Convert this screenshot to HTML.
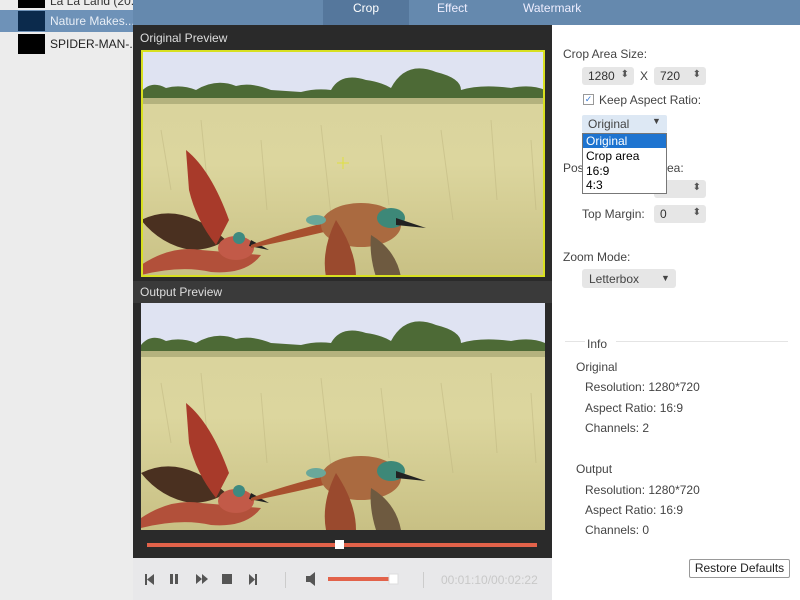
<!DOCTYPE html>
<html><head><meta charset="utf-8"><style>
*{margin:0;padding:0;box-sizing:border-box}
body{width:800px;height:600px;overflow:hidden;position:relative;font-family:"Liberation Sans","DejaVu Sans",sans-serif;font-size:12px;color:#333;background:#fff}
.abs{position:absolute}
.spin{position:absolute;background:#e6e6e6;border-radius:3px;height:18px;font-size:12px;padding:2px 6px;color:#333}
.spin:after{content:"⬍";position:absolute;right:5px;top:2px;font-size:10px;color:#555}
.lbl{position:absolute;font-size:12px;color:#444;white-space:nowrap}
</style></head><body>
<svg width="0" height="0" style="position:absolute"><defs>
<linearGradient id="grass" x1="0" y1="0" x2="0" y2="1"><stop offset="0" stop-color="#d8d29c"/><stop offset="0.5" stop-color="#dcd69e"/><stop offset="1" stop-color="#c8c084"/></linearGradient>
<g id="scene">
<rect width="404" height="227" fill="url(#grass)"/>
<rect width="404" height="45" fill="#dfe3f2"/>
<path d="M0 42 Q10 30 25 38 Q40 34 55 40 Q75 28 95 36 Q110 32 130 40 L160 42 Q175 38 190 40 Q200 22 225 30 Q240 32 250 38 Q265 10 295 22 Q320 28 320 40 Q340 34 370 38 Q390 34 404 40 L404 52 L0 50Z" fill="#4d6a36"/>
<rect y="48" width="404" height="6" fill="#b4b27e"/>
<g stroke="#bfb680" stroke-width="1" opacity=".5"><path d="M20 80 l10 60 M60 70 l8 80 M120 90 l6 70 M180 75 l10 90 M240 85 l8 70 M300 80 l12 90 M350 70 l6 80 M390 90 l5 70"/></g>
<path d="M0 170 Q40 150 85 190 Q70 200 50 200 Q20 195 0 170Z" fill="#4a3020"/>
<path d="M45 100 Q70 120 88 170 L75 195 Q55 170 48 140Z" fill="#a83a2a"/>
<path d="M0 215 Q30 195 60 200 L120 205 Q105 225 70 222 Q40 215 0 225Z" fill="#b2503a"/>
<ellipse cx="95" cy="198" rx="18" ry="12" fill="#c25a48"/>
<circle cx="98" cy="188" r="6" fill="#3e8a80"/>
<path d="M110 190 L128 200 L108 196Z" fill="#222"/>
<path d="M110 195 Q150 180 205 168 L200 178 Q150 190 110 198Z" fill="#a8502e"/>
<ellipse cx="220" cy="175" rx="40" ry="22" fill="#aa6a40"/>
<path d="M195 170 Q215 200 215 227 L185 227 Q180 200 195 170Z" fill="#9a4a2e"/>
<path d="M230 185 Q255 200 260 227 L235 227 Q228 205 230 185Z" fill="#6e5a40"/>
<ellipse cx="250" cy="168" rx="14" ry="10" fill="#3d8878"/>
<path d="M255 168 L285 178 L255 175Z" fill="#222"/>
<ellipse cx="175" cy="170" rx="10" ry="5" fill="#6aa89a"/>
</g></defs></svg>

<div class="abs" style="left:0;top:0;width:133px;height:600px;background:#ececec"></div>
<div class="abs" style="left:18px;top:0;width:27px;height:8px;background:#000"></div>
<div class="lbl" style="left:50px;top:-6px;color:#333">La La Land (20.</div>
<div class="abs" style="left:0;top:10px;width:133px;height:22px;background:#6e92b8"></div>
<div class="abs" style="left:18px;top:11px;width:27px;height:20px;background:#0b2a4c"></div>
<div class="lbl" style="left:50px;top:14px;color:#e8eef6">Nature Makes...</div>
<div class="abs" style="left:18px;top:34px;width:27px;height:20px;background:#000"></div>
<div class="lbl" style="left:50px;top:37px;color:#222">SPIDER-MAN-...</div>

<div class="abs" style="left:133px;top:0;width:667px;height:25px;background:#6589ae"></div>
<div class="abs" style="left:323px;top:0;width:86px;height:25px;background:#55779c"></div>
<div class="lbl" style="left:353px;top:1px;color:#fff">Crop</div>
<div class="lbl" style="left:437px;top:1px;color:#eef">Effect</div>
<div class="lbl" style="left:523px;top:1px;color:#eef">Watermark</div>

<div class="abs" style="left:133px;top:25px;width:419px;height:533px;background:#2a2a2a"></div>
<div class="lbl" style="left:140px;top:31px;color:#ddd">Original Preview</div>
<svg class="abs" style="left:141px;top:50px" width="404" height="227"><use href="#scene"/><rect x="1" y="1" width="402" height="225" fill="none" stroke="#d8e020" stroke-width="2"/><path d="M196 113 h12 M202 107 v12" stroke="#e0e040"/></svg>
<div class="abs" style="left:133px;top:281px;width:419px;height:22px;background:#3a3a3a"></div>
<div class="lbl" style="left:140px;top:285px;color:#ddd">Output Preview</div>
<svg class="abs" style="left:141px;top:303px" width="404" height="227"><use href="#scene"/></svg>
<div class="abs" style="left:147px;top:543px;width:390px;height:4px;background:#e2624a"></div>
<div class="abs" style="left:335px;top:540px;width:9px;height:9px;background:#fff"></div>

<div class="abs" style="left:133px;top:558px;width:419px;height:42px;background:#e8e8ea"></div>
<svg class="abs" style="left:133px;top:558px" width="419" height="42">
<g fill="#555"><rect x="12" y="16" width="2" height="11"/><path d="M14 21.5 L21 16 V27Z"/>
<rect x="37" y="16" width="3" height="10"/><rect x="42" y="16" width="3" height="10"/>
<path d="M63 16 L69 21 L63 26Z M69 16 L75 21 L69 26Z"/>
<rect x="89" y="16" width="10" height="10"/>
<path d="M116 16 L122 21.5 L116 27Z"/><rect x="122" y="16" width="2" height="11"/>
<path d="M173 18 h4 l5 -4 v14 l-5 -4 h-4Z"/></g>
<rect x="152" y="14" width="1" height="16" fill="#ccc"/><rect x="290" y="14" width="1" height="16" fill="#ccc"/>
<rect x="195" y="19" width="62" height="4" fill="#e2624a"/><rect x="256" y="16" width="9" height="10" fill="#fff" stroke="#ddd"/>
<text x="308" y="26" font-size="12" fill="#c8c8c8" font-family="Liberation Sans">00:01:10/00:02:22</text>
</svg>

<div class="lbl" style="left:563px;top:47px">Crop Area Size:</div>
<div class="spin" style="left:582px;top:67px;width:52px">1280</div>
<div class="lbl" style="left:640px;top:69px">X</div>
<div class="spin" style="left:654px;top:67px;width:52px">720</div>
<div class="abs" style="left:583px;top:94px;width:11px;height:11px;border:1px solid #999;background:#fff;color:#3a7bd5;font-size:9px;line-height:9px;text-align:center">✓</div>
<div class="lbl" style="left:599px;top:93px">Keep Aspect Ratio:</div>
<div class="lbl" style="left:563px;top:161px">Pos</div><div class="lbl" style="left:667px;top:161px">ea:</div>
<div class="spin" style="left:654px;top:180px;width:52px"></div>
<div class="lbl" style="left:582px;top:207px">Top Margin:</div>
<div class="spin" style="left:654px;top:205px;width:52px">0</div>
<div class="abs" style="left:582px;top:115px;width:85px;height:18px;background:#dde8f4;border-radius:2px"></div>
<div class="lbl" style="left:588px;top:117px">Original</div><div class="lbl" style="left:652px;top:116px;font-size:9px">▼</div>
<div class="abs" style="left:582px;top:133px;width:85px;height:61px;background:#fff;border:1px solid #777"></div>
<div class="abs" style="left:583px;top:134px;width:83px;height:14px;background:#1e74d0"></div>
<div class="lbl" style="left:586px;top:134px;color:#fff">Original</div>
<div class="lbl" style="left:586px;top:149px;color:#000">Crop area</div>
<div class="lbl" style="left:586px;top:164px;color:#000">16:9</div>
<div class="lbl" style="left:586px;top:178px;color:#000">4:3</div>
<div class="lbl" style="left:563px;top:250px">Zoom Mode:</div>
<div class="abs" style="left:582px;top:269px;width:94px;height:19px;background:#e6e6e6;border-radius:3px"></div>
<div class="lbl" style="left:589px;top:272px">Letterbox</div><div class="lbl" style="left:661px;top:273px;font-size:9px">▼</div>
<div class="abs" style="left:565px;top:341px;width:20px;height:1px;background:#e4e4e4"></div>
<div class="abs" style="left:616px;top:341px;width:172px;height:1px;background:#e4e4e4"></div>
<div class="lbl" style="left:587px;top:337px">Info</div>
<div class="lbl" style="left:576px;top:360px">Original</div>
<div class="lbl" style="left:585px;top:380px">Resolution: 1280*720</div>
<div class="lbl" style="left:585px;top:401px">Aspect Ratio: 16:9</div>
<div class="lbl" style="left:585px;top:421px">Channels: 2</div>
<div class="lbl" style="left:576px;top:462px">Output</div>
<div class="lbl" style="left:585px;top:483px">Resolution: 1280*720</div>
<div class="lbl" style="left:585px;top:503px">Aspect Ratio: 16:9</div>
<div class="lbl" style="left:585px;top:523px">Channels: 0</div>
<div class="abs" style="left:689px;top:559px;width:101px;height:19px;border:1px solid #999;border-radius:2px;background:#fff;font-size:12px;text-align:center;line-height:17px;color:#222">Restore Defaults</div>
</body></html>
